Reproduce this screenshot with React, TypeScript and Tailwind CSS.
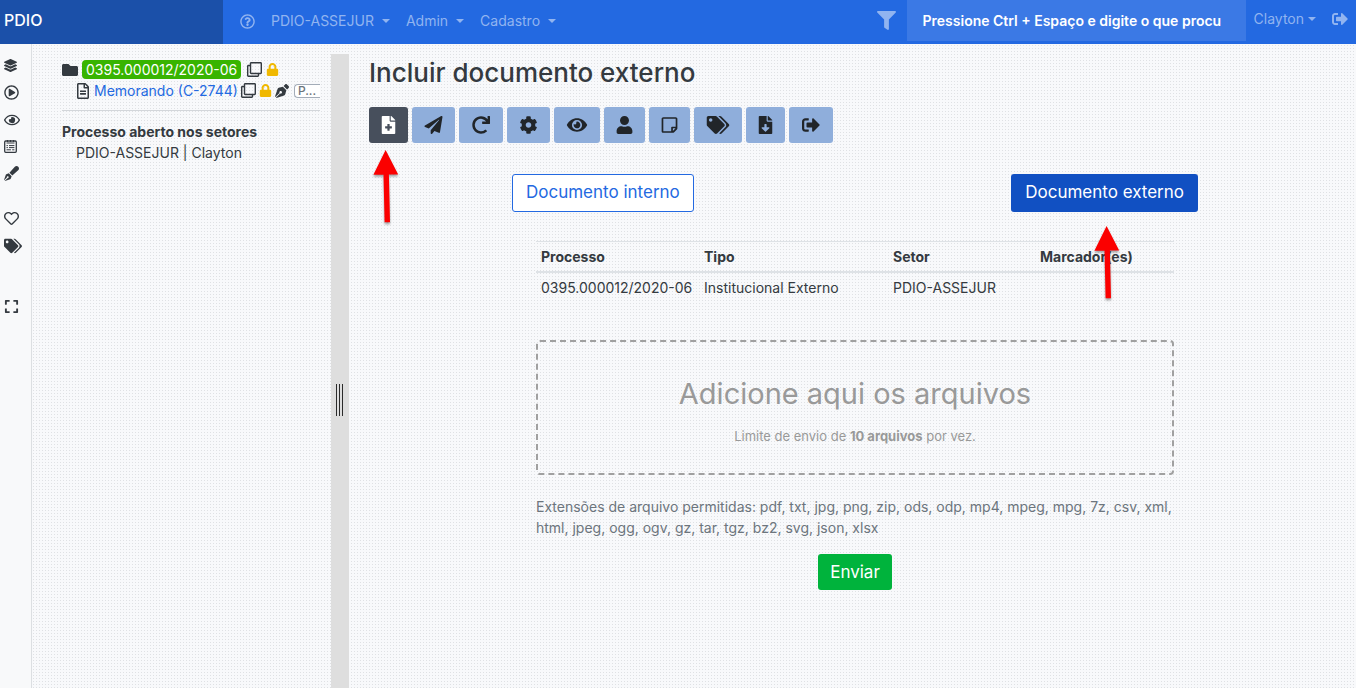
import type { ReactNode } from 'react';
import type { IconType } from 'react-icons';
import {
  FaCog,
  FaExpand,
  FaEye,
  FaFileDownload,
  FaFileMedical,
  FaFilter,
  FaFolder,
  FaLayerGroup,
  FaLock,
  FaPaperPlane,
  FaPenFancy,
  FaPenNib,
  FaRedo,
  FaRegClone,
  FaRegEye,
  FaRegFileAlt,
  FaRegHeart,
  FaRegPlayCircle,
  FaRegQuestionCircle,
  FaRegStickyNote,
  FaSignOutAlt,
  FaTags,
  FaUser,
} from 'react-icons/fa';

function Caret() {
  return <span className="border-x-4 border-t-4 border-x-transparent border-t-current" />;
}

function NotesIcon() {
  return (
    <svg viewBox="0 0 13 13" className="size-[13px]" fill="none" stroke="currentColor">
      <rect x="0.7" y="1" width="11.6" height="11.3" rx="1" strokeWidth="1.3" />
      <path d="M2.5 3h8M2.5 5.6h1.4M5 5.6h5.4M2.5 7.6h1.4M5 7.6h5.4M2.5 9.8h4.4M8.2 9.8h2.2M3.5 0v2M6.5 0v2M9.5 0v2" strokeWidth="1" />
    </svg>
  );
}

function Arrow() {
  return (
    <svg
      viewBox="0 0 26 76"
      className="pointer-events-none absolute h-[76px] w-[26px] drop-shadow-[0_2px_1px_rgba(0,0,0,0.35)]"
      fill="#fb0000"
      aria-hidden="true"
    >
      <path d="M12.6 0 25.2 24.6H15.9L17 72.3H11.6L10.5 24.8H0.4Z" />
    </svg>
  );
}

function RailButton({ label, children }: { label: string; children: ReactNode }) {
  return (
    <button aria-label={label} className="flex h-[27px] items-center">
      {children}
    </button>
  );
}

const tools: { label: string; Icon: IconType; size: string }[] = [
  { label: 'Enviar processo', Icon: FaPaperPlane, size: 'h-[18px] w-[19px]' },
  { label: 'Atualizar', Icon: FaRedo, size: 'h-[18px] w-5' },
  { label: 'Configurações', Icon: FaCog, size: 'h-[18px] w-[19px]' },
  { label: 'Visualizar', Icon: FaEye, size: 'h-[18px] w-[22px]' },
  { label: 'Interessados', Icon: FaUser, size: 'h-[18px] w-[17px]' },
  { label: 'Notas', Icon: FaRegStickyNote, size: 'h-[18px] w-[17px]' },
  { label: 'Marcadores', Icon: FaTags, size: 'h-[18px] w-6' },
  { label: 'Baixar', Icon: FaFileDownload, size: 'h-[18px] w-[15px]' },
  { label: 'Sair', Icon: FaSignOutAlt, size: 'h-[18px] w-5' },
];

const columns = [
  { heading: 'Processo', width: 'w-[163px]' },
  { heading: 'Tipo', width: 'w-[189px]' },
  { heading: 'Setor', width: 'w-[147px]' },
  { heading: 'Marcador(es)', width: '' },
];

function Header() {
  return (
    <header className="flex h-11 bg-[#2369e1] text-sm text-[#91b4f0]">
      <a href="#" className="flex w-[223px] shrink-0 items-center bg-[#1b50a9] px-1 pb-1 text-base font-medium text-white">
        PDIO
      </a>
      <nav className="flex flex-1 items-center gap-4 pb-0.5 pl-[17px]">
        <a href="#" aria-label="Ajuda">
          <FaRegQuestionCircle className="size-[15px]" />
        </a>
        {['PDIO-ASSEJUR', 'Admin', 'Cadastro'].map((item) => (
          <button key={item} className="flex items-center gap-2">
            {item}
            <Caret />
          </button>
        ))}
      </nav>
      <button aria-label="Filtrar" className="mr-[11px] pb-1">
        <FaFilter className="size-[19px]" />
      </button>
      <input
        aria-label="Pesquisar"
        placeholder="Pressione Ctrl + Espaço e digite o que procu"
        className="h-[41px] w-[339px] bg-[#3b79e5] px-4 text-sm font-semibold text-white outline-none placeholder:text-white"
      />
      <div className="flex items-center gap-4 pr-2 pb-1.5 pl-2">
        <button className="flex items-center gap-1">
          Clayton
          <Caret />
        </button>
        <a href="#" aria-label="Sair">
          <FaSignOutAlt className="size-4" />
        </a>
      </div>
    </header>
  );
}

function Rail() {
  return (
    <aside className="flex w-8 shrink-0 flex-col items-start border-r border-[#dcdfe2] bg-[#f8f9fa] pt-2 pl-1">
      <RailButton label="Processos"><FaLayerGroup className="size-[13px]" /></RailButton>
      <RailButton label="Iniciar"><FaRegPlayCircle className="size-[15px]" /></RailButton>
      <RailButton label="Acompanhar"><FaRegEye className="size-4" /></RailButton>
      <RailButton label="Formulários"><NotesIcon /></RailButton>
      <RailButton label="Assinar"><FaPenFancy className="size-[15px]" /></RailButton>
      <div className="mt-[18px] flex flex-col">
        <RailButton label="Favoritos"><FaRegHeart className="size-[15px]" /></RailButton>
        <RailButton label="Marcadores"><FaTags className="size-[18px]" /></RailButton>
      </div>
      <div className="mt-[34px]">
        <RailButton label="Tela cheia"><FaExpand className="size-[15px]" /></RailButton>
      </div>
    </aside>
  );
}

function ProcessTree() {
  return (
    <section className="w-[299px] shrink-0 pt-[15px] pr-[11px] pl-[30px] text-sm leading-[21px]">
      <div className="flex h-[21px] items-center gap-1">
        <FaFolder className="size-4 shrink-0" />
        <a href="#" className="rounded bg-[#38b400] px-1 text-white leading-[19px]">
          0395.000012/2020-06
        </a>
        <FaRegClone className="ml-0.5 size-[15px] shrink-0" />
        <FaLock className="size-[13px] shrink-0 text-[#f0b800]" />
      </div>
      <div className="flex h-[21px] items-center gap-[3px] overflow-hidden pl-[13px]">
        <FaRegFileAlt className="size-4 shrink-0" />
        <a href="#" className="shrink-0 text-[#2369e1]">
          Memorando (C-2744)
        </a>
        <FaRegClone className="size-[15px] shrink-0" />
        <FaLock className="size-[13px] shrink-0 text-[#f0b800]" />
        <FaPenNib className="size-3.5 shrink-0" />
        <span className="ml-0.5 flex-1 rounded-l-sm border border-r-0 border-[#a3acb8] bg-white pl-[3px] text-xs leading-3 font-medium text-[#6c757d]">
          P...
        </span>
      </div>
      <hr className="mt-[9px] mb-2.5 border-[#d3d6da]" />
      <h2 className="font-bold">Processo aberto nos setores</h2>
      <p className="pl-3.5">PDIO-ASSEJUR | Clayton</p>
    </section>
  );
}

function Splitter() {
  return (
    <div className="mt-2.5 flex w-[18px] shrink-0 items-start gap-0.5 bg-[#dedede] pt-[330px] pl-[5px]">
      <span className="h-8 w-px bg-[#2b2b2b]" />
      <span className="h-8 w-px bg-[#2b2b2b]" />
      <span className="h-8 w-px bg-[#2b2b2b]" />
    </div>
  );
}

function Main() {
  return (
    <main className="min-w-0 flex-1 pt-3 pr-[15px] pl-5">
      <h1 className="text-[26px] leading-[33px] font-medium">Incluir documento externo</h1>
      <div className="mt-[18px] flex gap-1 text-[#212529]">
        <div className="relative">
          <button aria-label="Incluir documento" className="flex h-9 items-center rounded-[3px] bg-[#474f5c] px-3 text-white">
            <FaFileMedical className="h-[18px] w-[15px]" />
          </button>
          <div className="absolute top-[43px] left-1">
            <Arrow />
          </div>
        </div>
        {tools.map(({ label, Icon, size }) => (
          <button key={label} aria-label={label} className="flex h-9 items-center rounded-[3px] bg-[#8faedb] px-3">
            <Icon className={size} />
          </button>
        ))}
      </div>

      <div className="mx-auto mt-[31px] flex max-w-[686px] justify-between text-[17px]">
        <button className="h-[38px] rounded-[3px] border border-[#2369e1] bg-white px-[13px] text-[#2369e1]">
          Documento interno
        </button>
        <div className="relative">
          <button className="h-[38px] rounded-[3px] bg-[#1150c2] px-3.5 text-white">Documento externo</button>
          <div className="absolute top-[52px] left-[83px]">
            <Arrow />
          </div>
        </div>
      </div>

      <div className="mx-auto mt-[29px] flex w-2/3 flex-col px-[5px] text-sm leading-[21px]">
        <table className="w-full table-fixed border-separate border-spacing-0 text-left">
          <thead>
            <tr>
              {columns.map(({ heading, width }) => (
                <th key={heading} className={`border-t border-b-2 border-[#dee2e6] px-[5px] py-1 font-bold ${width}`}>
                  {heading}
                </th>
              ))}
            </tr>
          </thead>
          <tbody>
            <tr>
              <td className="px-[5px] py-1">0395.000012/2020-06</td>
              <td className="px-[5px] py-1">Institucional Externo</td>
              <td className="px-[5px] py-1">PDIO-ASSEJUR</td>
              <td className="px-[5px] py-1" />
            </tr>
          </tbody>
        </table>

        <label className="mt-[38px] flex h-[135px] cursor-pointer flex-col items-center rounded border-2 border-dashed border-[#a0a0a0] pt-8 text-[#999]">
          <span className="text-[29px] leading-10">Adicione aqui os arquivos</span>
          <span className="mt-3 text-[13px] leading-5">
            Limite de envio de <b>10 arquivos</b> por vez.
          </span>
          <input type="file" multiple className="sr-only" />
        </label>

        <p className="mt-[21px] text-[#6c757d]">
          Extensões de arquivo permitidas: pdf, txt, jpg, png, zip, ods, odp, mp4, mpeg, mpg, 7z, csv, xml, html, jpeg, ogg, ogv, gz,
          tar, tgz, bz2, svg, json, xlsx
        </p>

        <button className="mt-4 h-9 self-center rounded-[3px] bg-[#00b33c] px-3 text-[17px] text-white">Enviar</button>
      </div>
    </main>
  );
}

export default function App() {
  return (
    <div className="flex min-h-screen flex-col bg-[#f8f9fb] bg-[conic-gradient(at_1px_1px,transparent_75%,#dfe1e4_0)] bg-size-[3px_3px] font-['Inter',sans-serif] text-[#343a40]">
      <Header />
      <div className="flex flex-1">
        <Rail />
        <ProcessTree />
        <Splitter />
        <Main />
      </div>
    </div>
  );
}
